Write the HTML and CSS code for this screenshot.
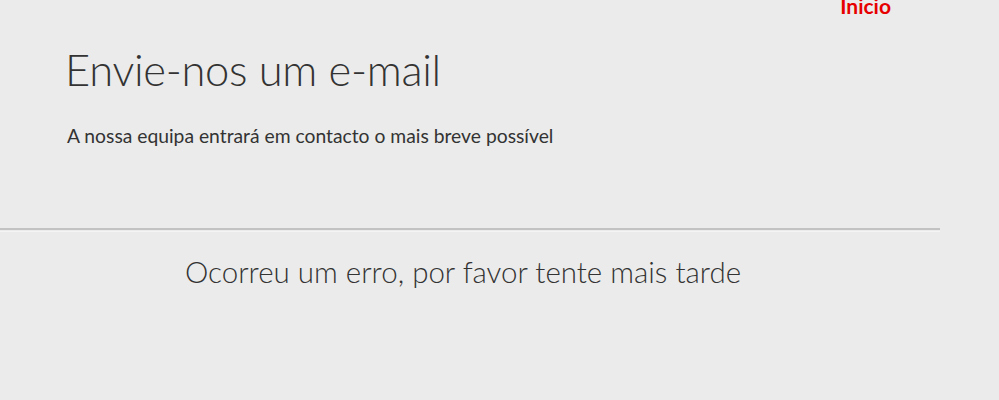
FILE: index.html
```html
<!DOCTYPE html>
<html lang="pt">
<head>
<meta charset="utf-8">
<title>Envie-nos um e-mail</title>
<link rel="stylesheet" href="styles.css">
</head>
<body>
<header class="topbar">
  <a class="home-link" href="#">Inicio</a>
</header>
<main class="page">
  <section class="intro">
    <h1 class="title">Envie-nos um e-mail</h1>
    <p class="subtitle">A nossa equipa entrará em contacto o mais breve possível</p>
  </section>
  <hr class="divider">
  <p class="error">Ocorreu um erro, por favor tente mais tarde</p>
</main>
</body>
</html>
```
FILE: styles.css
```css
html, body {
  margin: 0;
  padding: 0;
  background: #ebebeb;
  color: #333333;
  font-family: Lato, "Liberation Sans", sans-serif;
}
.topbar {
  display: flex;
  justify-content: flex-end;
  padding-right: 108px;
  height: 18px;
}
.home-link {
  color: #e60000;
  font-weight: 700;
  font-size: 21px;
  line-height: 21px;
  margin-top: -5px;
  text-decoration: none;
}
.page {
  width: 940px;
}
.intro {
  padding: 25px 0 0 65px;
  height: 210px;
  box-sizing: border-box;
}
.title {
  margin: 0;
  font-weight: 300;
  font-size: 43.5px;
  line-height: 52px;
  letter-spacing: -0.3px;
}
.subtitle {
  margin: 29px 0 0 2px;
  font-size: 19.3px;
  line-height: 24px;
}
.divider {
  margin: 0;
  border: 0;
  border-top: 2px solid #c2c2c2;
  border-bottom: 1px solid #f4f4f4;
  height: 1px;
}
.error {
  margin: 22px 0 0;
  padding-right: 14px;
  text-align: center;
  font-weight: 300;
  font-size: 29.5px;
  line-height: 36px;
}
```
